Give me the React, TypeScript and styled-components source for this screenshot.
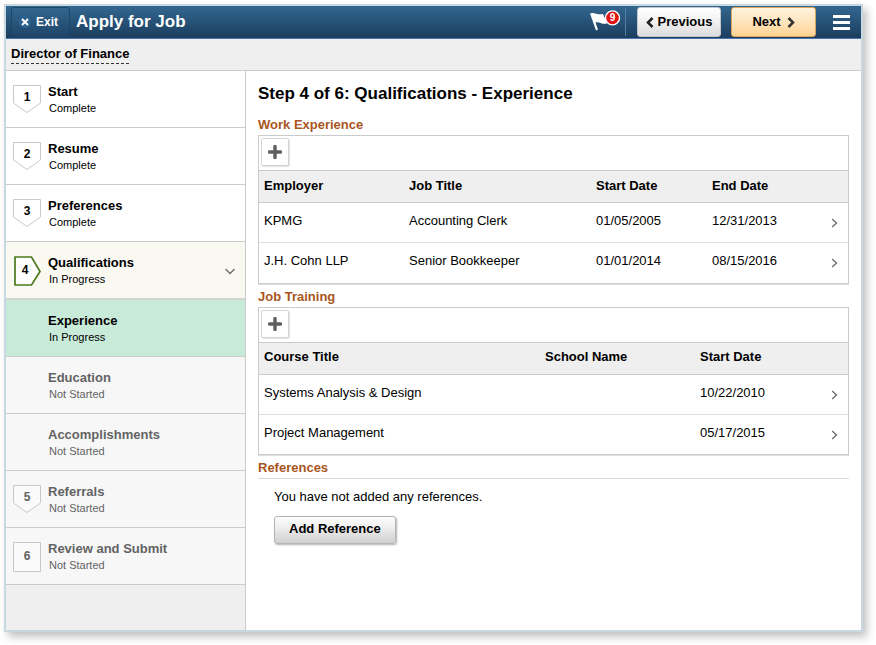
import React from "react";
import styled, { createGlobalStyle, css } from "styled-components";

const GlobalStyle = createGlobalStyle`
  *, *::before, *::after { box-sizing: border-box; }
  body {
    margin: 0;
    background: #fff;
    color: #000;
    font-family: "Liberation Sans", Arial, Helvetica, sans-serif;
    font-size: 13px;
    line-height: 16px;
  }
  button { font: inherit; color: inherit; cursor: pointer; margin: 0; }
  h1, h2, h3, p, ol { margin: 0; padding: 0; }
`;

const Frame = styled.div`
  display: flex;
  flex-direction: column;
  margin: 4px 13px 13px 4px;
  min-height: calc(100vh - 17px);
  border: 2px solid #c8d8e1;
  background: #fff;
  box-shadow: 4px 5px 8px rgba(0, 0, 0, 0.24);
`;

const TopBar = styled.header`
  display: flex;
  align-items: center;
  height: 33px;
  padding: 0 11px 0 5px;
  border-bottom: 1px solid #4a74ae;
  background: linear-gradient(#336790, #1b3d5e);
  color: #fff;
`;

const ExitButton = styled.button`
  display: flex;
  align-items: center;
  gap: 5px;
  height: 30px;
  width: 59px;
  padding: 0 7px;
  border: 1px solid #1d486c;
  border-radius: 3px;
  background: linear-gradient(#33668f, #1f4569);
  color: #fff;
  font-size: 12px;
  font-weight: bold;
`;

const AppTitle = styled.h1`
  flex: 1;
  padding-left: 6px;
  font-size: 17px;
  line-height: 20px;
`;

const FlagButton = styled.button`
  display: flex;
  padding: 0;
  border: 0;
  background: none;
`;

const Divider = styled.span`
  width: 1px;
  height: 28px;
  margin: 0 11px 0 4px;
  background: #5580a3;
`;

const NavButton = styled.button<{ $primary?: boolean }>`
  display: flex;
  align-items: center;
  justify-content: center;
  gap: 4px;
  width: 84px;
  height: 30px;
  padding: 0;
  border: 1px solid #c4c8cc;
  border-radius: 3px;
  background: linear-gradient(#fff, #f2f2f2 45%, #dcdcdc);
  color: #000;
  font-weight: bold;
  ${(p) =>
    p.$primary &&
    css`
      gap: 6px;
      margin-left: 10px;
      width: 85px;
      border-color: #d8a75e;
      background: linear-gradient(#fff3e0, #ffe5bd 50%, #ffd391);
    `}
`;

const MenuButton = styled.button`
  display: flex;
  padding: 0;
  margin-left: 17px;
  border: 0;
  background: none;
`;

const JobBar = styled.div`
  display: flex;
  align-items: flex-start;
  height: 32px;
  padding: 7px 5px 0;
  border-bottom: 1px solid #cbcbcb;
  background: #efefef;
`;

const JobName = styled.h2`
  padding-bottom: 1px;
  border-bottom: 1px dashed #333;
  font-size: 13px;
  line-height: 16px;
`;

const Body = styled.div`
  display: flex;
  flex: 1;
`;

const Sidebar = styled.nav`
  flex: 0 0 240px;
  border-right: 1px solid #cbcbcb;
  background: #efefef;
`;

const StepList = styled.ol`
  list-style: none;
`;

type Tone = "done" | "open" | "current" | "todo";

const toneFill: Record<Tone, string> = {
  done: "#ffffff",
  open: "#f9f9f1",
  current: "#c8ebd9",
  todo: "#f7f7f7",
};

const StepButton = styled.button<{ $tone: Tone }>`
  display: grid;
  grid-template-columns: 28px 1fr 12px;
  column-gap: 7px;
  align-items: start;
  width: 100%;
  padding: 12px 9px 10px 7px;
  border: 0;
  border-bottom: ${(p) => (p.$tone === "open" ? 2 : 1)}px solid
    ${(p) => (p.$tone === "open" ? "#d3d6cf" : "#cbcbcb")};
  background: ${(p) => toneFill[p.$tone]};
  color: ${(p) => (p.$tone === "todo" ? "#636363" : "#000")};
  text-align: left;
`;

const StepName = styled.strong`
  display: block;
  line-height: 17px;
`;

const StepStatus = styled.span`
  display: block;
  padding-left: 1px;
  font-size: 11px;
  line-height: 17px;
`;

const Marker = styled.span<{ $open?: boolean; $square?: boolean }>`
  display: grid;
  padding-top: 2px;
  > * { grid-area: 1 / 1; }
  > span {
    padding: ${(p) => (p.$open ? "6px 4px 0 0" : p.$square ? "6px 0 0" : "4px 0 0")};
    text-align: center;
    font-weight: bold;
    font-size: 12px;
    line-height: 16px;
  }
`;

const StepArrow = styled.span`
  display: flex;
  align-self: center;
`;

const Main = styled.main`
  flex: 1;
  min-width: 0;
  padding: 13px 12px 20px;
`;

const PageTitle = styled.h2`
  margin-bottom: 13px;
  font-size: 17px;
  line-height: 20px;
`;

const SectionTitle = styled.h3`
  color: #a9561e;
  font-size: 13px;
  line-height: 16px;
`;

const Section = styled.section`
  margin-bottom: 5px;
`;

const GridBox = styled.div`
  margin-top: 2px;
  border: 1px solid #cbcbcb;
  overflow-x: auto;
  box-shadow: 0 1px 0 #dedede;
`;

const GridTools = styled.div`
  display: flex;
  height: 34px;
  padding: 2px;
`;

const AddRowButton = styled.button`
  display: grid;
  place-items: center;
  width: 28px;
  height: 28px;
  padding: 0;
  border: 1px solid #d4d4d4;
  border-radius: 2px;
  background: #fff;
  box-shadow: 1px 1px 1px rgba(0, 0, 0, 0.12);
`;

const Grid = styled.table`
  width: 100%;
  table-layout: fixed;
  border-collapse: collapse;
`;

const Head = styled.th<{ $width?: number }>`
  width: ${(p) => (p.$width ? `${p.$width}px` : "auto")};
  height: 32px;
  padding: 0 5px 2px;
  border-top: 1px solid #cbcbcb;
  border-bottom: 1px solid #cbcbcb;
  background: #efefef;
  text-align: left;
`;

const Cell = styled.td`
  height: 40px;
  padding: 0 5px 3px;
  tr + tr > & { border-top: 1px solid #dedede; }
`;

const ActionCell = styled(Cell)`
  padding: 0 10px 0 0;
  text-align: right;
`;

const OpenRowButton = styled.button`
  display: inline-flex;
  padding: 0;
  border: 0;
  background: none;
  vertical-align: middle;
`;

const ReferencesTitle = styled(SectionTitle)`
  padding-bottom: 2px;
  border-bottom: 1px solid #dadada;
`;

const ReferencesBody = styled.div`
  padding: 10px 16px 0;
`;

const AddReferenceButton = styled.button`
  margin-top: 11px;
  height: 28px;
  padding: 0 14px 2px;
  border: 1px solid #b4b4b4;
  border-radius: 3px;
  background: linear-gradient(#fdfdfd, #ececec 45%, #cfcfcf);
  box-shadow: 1px 1px 2px rgba(0, 0, 0, 0.3);
  font-weight: bold;
`;

const Chevron = ({ d, w, h, color = "#6a6a6a", weight = 1.3 }: { d: string; w: number; h: number; color?: string; weight?: number }) => (
  <svg width={w} height={h} viewBox={`0 0 ${w} ${h}`} fill="none" stroke={color} strokeWidth={weight} aria-hidden="true">
    <path d={d} />
  </svg>
);

type Step = { no?: number; name: string; status: string; tone: Tone };

const steps: Step[] = [
  { no: 1, name: "Start", status: "Complete", tone: "done" },
  { no: 2, name: "Resume", status: "Complete", tone: "done" },
  { no: 3, name: "Preferences", status: "Complete", tone: "done" },
  { no: 4, name: "Qualifications", status: "In Progress", tone: "open" },
  { name: "Experience", status: "In Progress", tone: "current" },
  { name: "Education", status: "Not Started", tone: "todo" },
  { name: "Accomplishments", status: "Not Started", tone: "todo" },
  { no: 5, name: "Referrals", status: "Not Started", tone: "todo" },
  { no: 6, name: "Review and Submit", status: "Not Started", tone: "todo" },
];

const StepMarker = ({ step, last }: { step: Step; last: boolean }) => {
  if (!step.no) return <span />;
  const open = step.tone === "open";
  const shape = open
    ? "M2 1H18.500L27 15.500L18.500 29H2Z"
    : last
      ? "M.5.5H27.500V29.500H.5Z"
      : "M.5.5H27.500V18L14 27.500L.5 18Z";
  return (
    <Marker $open={open} $square={last}>
      <svg width="28" height="30" viewBox="0 0 28 30" aria-hidden="true">
        <path d={shape} fill="#fff" fillOpacity={step.tone === "todo" ? 0.4 : 1} stroke={open ? "#4b7a1c" : "#c9c9c9"} strokeWidth={open ? 1.7 : 1} />
      </svg>
      <span>{step.no}</span>
    </Marker>
  );
};

type Column = { label: string; width?: number };

const DataSection = ({ title, columns, rows }: { title: string; columns: Column[]; rows: string[][] }) => (
  <Section aria-label={title}>
    <SectionTitle>{title}</SectionTitle>
    <GridBox>
      <GridTools>
        <AddRowButton type="button" aria-label={`Add ${title}`}>
          <svg width="14" height="14" viewBox="0 0 14 14" aria-hidden="true">
            <path d="M7 1.500V12.500M1.500 7H12.500" stroke="#5f5f5f" strokeWidth="3.400" strokeLinecap="round" />
          </svg>
        </AddRowButton>
      </GridTools>
      <Grid>
        <thead>
          <tr>
            {columns.map((c) => (
              <Head key={c.label} scope="col" $width={c.width}>{c.label}</Head>
            ))}
            <Head as="td" $width={36} />
          </tr>
        </thead>
        <tbody>
          {rows.map((r) => (
            <tr key={r[0]}>
              {r.map((v, i) => <Cell key={i}>{v}</Cell>)}
              <ActionCell>
                <OpenRowButton type="button" aria-label={`Open ${r[0]}`}>
                  <Chevron w={7} h={10} d="M1.200 1L5.500 5L1.200 9" />
                </OpenRowButton>
              </ActionCell>
            </tr>
          ))}
        </tbody>
      </Grid>
    </GridBox>
  </Section>
);

export default function App() {
  return (
    <>
      <GlobalStyle />
      <Frame>
        <TopBar>
          <ExitButton type="button">
            <svg width="12" height="12" viewBox="0 0 12 12" aria-hidden="true">
              <circle cx="6" cy="6" r="6" fill="#2b6492" />
              <path d="M3 3L9 9M9 3L3 9" stroke="#fff" strokeWidth="1.9" />
            </svg>
            Exit
          </ExitButton>
          <AppTitle>Apply for Job</AppTitle>
          <FlagButton type="button" aria-label="Notifications">
            <svg width="31" height="24" viewBox="0 0 31 24" aria-hidden="true">
              <path d="M0 3.500C4 1.500 7 5.500 13 4L17 13.500C12 15 9 11 5.500 12.500L8 19.500L6 20.500Z" fill="#fff" />
              <circle cx="22.500" cy="7.900" r="7" fill="#e01212" stroke="#fff" strokeWidth="1.400" />
              <text x="22.500" y="11.400" textAnchor="middle" fill="#fff" fontSize="10" fontWeight="bold">9</text>
            </svg>
          </FlagButton>
          <Divider />
          <NavButton type="button">
            <Chevron w={8} h={11} color="#222" weight={2.5} d="M6.500 1L2 5.500L6.500 10" />
            Previous
          </NavButton>
          <NavButton type="button" $primary>
            Next
            <Chevron w={8} h={11} color="#333" weight={2.5} d="M1.500 1L6 5.500L1.500 10" />
          </NavButton>
          <MenuButton type="button" aria-label="Menu">
            <svg width="17" height="15" viewBox="0 0 17 15" fill="#fff" aria-hidden="true">
              <path d="M0 0H17V3H0ZM0 6H17V9H0ZM0 12H17V15H0Z" />
            </svg>
          </MenuButton>
        </TopBar>
        <JobBar>
          <JobName>Director of Finance</JobName>
        </JobBar>
        <Body>
          <Sidebar aria-label="Application steps">
            <StepList>
              {steps.map((s, i) => (
                <li key={s.name}>
                  <StepButton type="button" $tone={s.tone} aria-current={s.tone === "current" ? "step" : undefined}>
                    <StepMarker step={s} last={i === steps.length - 1} />
                    <span>
                      <StepName>{s.name}</StepName>
                      <StepStatus>{s.status}</StepStatus>
                    </span>
                    {s.tone === "open" && (
                      <StepArrow>
                        <Chevron w={12} h={7} d="M1.500 1L6 5.500L10.500 1" />
                      </StepArrow>
                    )}
                  </StepButton>
                </li>
              ))}
            </StepList>
          </Sidebar>
          <Main>
            <PageTitle>Step 4 of 6: Qualifications - Experience</PageTitle>
            <DataSection
              title="Work Experience"
              columns={[{ label: "Employer", width: 145 }, { label: "Job Title" }, { label: "Start Date", width: 116 }, { label: "End Date", width: 105 }]}
              rows={[
                ["KPMG", "Accounting Clerk", "01/05/2005", "12/31/2013"],
                ["J.H. Cohn LLP", "Senior Bookkeeper", "01/01/2014", "08/15/2016"],
              ]}
            />
            <DataSection
              title="Job Training"
              columns={[{ label: "Course Title" }, { label: "School Name", width: 155 }, { label: "Start Date", width: 117 }]}
              rows={[
                ["Systems Analysis & Design", "", "10/22/2010"],
                ["Project Management", "", "05/17/2015"],
              ]}
            />
            <section aria-label="References">
              <ReferencesTitle>References</ReferencesTitle>
              <ReferencesBody>
                <p>You have not added any references.</p>
                <AddReferenceButton type="button">Add Reference</AddReferenceButton>
              </ReferencesBody>
            </section>
          </Main>
        </Body>
      </Frame>
    </>
  );
}
